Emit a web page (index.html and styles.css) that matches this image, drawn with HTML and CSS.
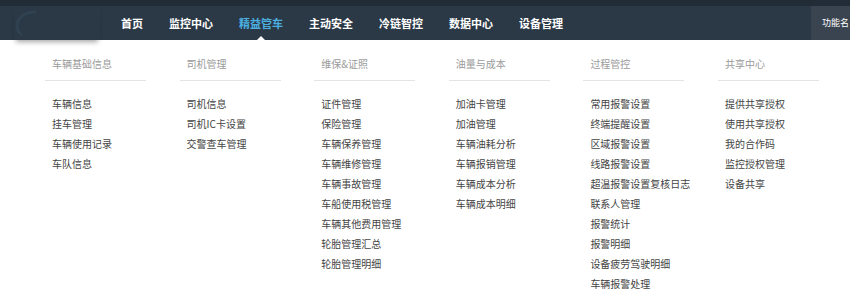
FILE: index.html
```html
<!DOCTYPE html>
<html lang="zh">
<head>
<meta charset="utf-8">
<link rel="stylesheet" href="styles.css">
</head>
<body>
<header class="header">
  <div class="topstrip"></div>
  <nav class="nav">
    <div class="logo">
      <svg width="30" height="26" viewBox="0 0 30 26"><path d="M22 2 C10 2 3 8 3 16 C3 20 5 23 8 25" fill="none" stroke="#304150" stroke-width="3"/></svg>
    </div>
    <ul class="menu">
      <li class="menu-item">首页</li>
      <li class="menu-item">监控中心</li>
      <li class="menu-item active">精益管车</li>
      <li class="menu-item">主动安全</li>
      <li class="menu-item">冷链智控</li>
      <li class="menu-item">数据中心</li>
      <li class="menu-item">设备管理</li>
    </ul>
    <div class="func">功能名</div>
  </nav>
</header>
<main class="dropdown">
  <section class="col">
    <h3 class="col-title">车辆基础信息</h3>
    <ul class="col-list">
      <li>车辆信息</li><li>挂车管理</li><li>车辆使用记录</li><li>车队信息</li>
    </ul>
  </section>
  <section class="col">
    <h3 class="col-title">司机管理</h3>
    <ul class="col-list">
      <li>司机信息</li><li>司机IC卡设置</li><li>交警查车管理</li>
    </ul>
  </section>
  <section class="col">
    <h3 class="col-title">维保&amp;证照</h3>
    <ul class="col-list">
      <li>证件管理</li><li>保险管理</li><li>车辆保养管理</li><li>车辆维修管理</li><li>车辆事故管理</li><li>车船使用税管理</li><li>车辆其他费用管理</li><li>轮胎管理汇总</li><li>轮胎管理明细</li>
    </ul>
  </section>
  <section class="col">
    <h3 class="col-title">油量与成本</h3>
    <ul class="col-list">
      <li>加油卡管理</li><li>加油管理</li><li>车辆油耗分析</li><li>车辆报销管理</li><li>车辆成本分析</li><li>车辆成本明细</li>
    </ul>
  </section>
  <section class="col">
    <h3 class="col-title">过程管控</h3>
    <ul class="col-list">
      <li>常用报警设置</li><li>终端提醒设置</li><li>区域报警设置</li><li>线路报警设置</li><li>超温报警设置复核日志</li><li>联系人管理</li><li>报警统计</li><li>报警明细</li><li>设备疲劳驾驶明细</li><li>车辆报警处理</li>
    </ul>
  </section>
  <section class="col">
    <h3 class="col-title">共享中心</h3>
    <ul class="col-list">
      <li>提供共享授权</li><li>使用共享授权</li><li>我的合作码</li><li>监控授权管理</li><li>设备共享</li>
    </ul>
  </section>
</main>
</body>
</html>
```

FILE: styles.css
```css
html, body {
  margin: 0;
  padding: 0;
  background: #ffffff;
  font-family: "Noto Sans CJK SC", "Noto Sans", sans-serif;
  overflow: hidden;
}
ul { list-style: none; margin: 0; padding: 0; }
h3 { margin: 0; font-weight: normal; }

.header { position: relative; z-index: 2; }
.topstrip { height: 6px; background: #222c37; }
.nav {
  height: 34px;
  background: #2b3946;
  display: flex;
  align-items: stretch;
}
.logo {
  width: 86px;
  margin-left: 14px;
  display: flex;
  align-items: center;
  box-shadow: 0 4px 5px -2px rgba(0,0,0,0.35);
}
.menu {
  display: flex;
  margin-left: 8px;
}
.menu-item {
  position: relative;
  padding: 0 13px;
  font-size: 11px;
  line-height: 34px;
  color: #ffffff;
  font-weight: bold;
}
.menu-item.active { color: #4bb0e0; }
.menu-item.active::after {
  content: "";
  position: absolute;
  left: 50%;
  bottom: 0;
  margin-left: -4px;
  border-left: 4px solid transparent;
  border-right: 4px solid transparent;
  border-bottom: 4px solid #ffffff;
}
.func {
  margin-left: auto;
  width: 28px;
  padding-left: 11px;
  background: #3a4451;
  color: #ffffff;
  font-size: 9px;
  line-height: 34px;
  white-space: nowrap;
  overflow: hidden;
}

.dropdown {
  display: grid;
  grid-template-columns: repeat(6, 101px);
  column-gap: 33.6px;
  padding: 14px 0 0 45px;
}
.col-title {
  font-size: 10px;
  line-height: 20px;
  color: #9a9a9a;
  padding: 0 0 6px 7px;
  border-bottom: 1px solid #e4e4e4;
}
.col-list {
  margin-top: 13px;
  padding-left: 7px;
}
.col-list li {
  font-size: 10px;
  line-height: 20px;
  color: #444444;
  white-space: nowrap;
}
```
